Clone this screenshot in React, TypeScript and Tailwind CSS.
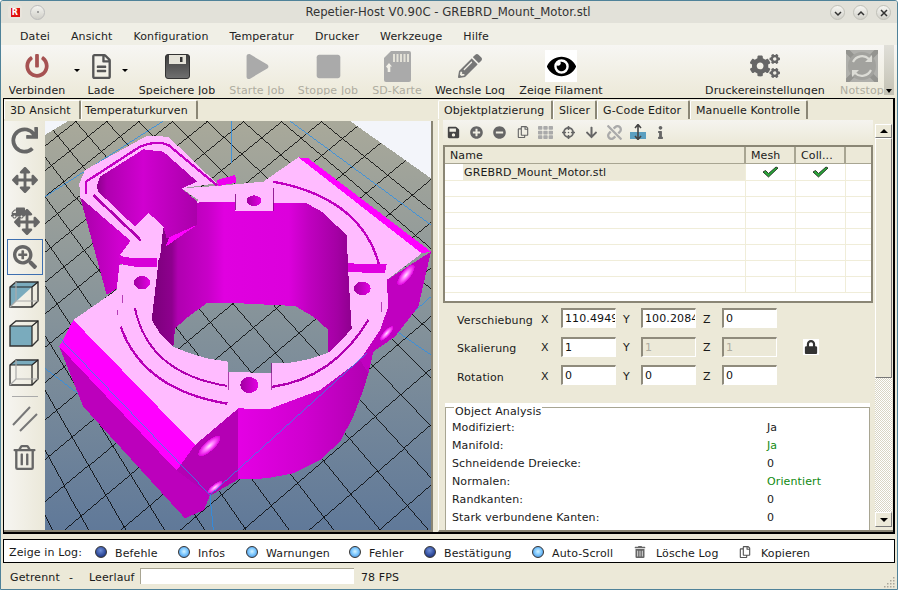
import React from "react";
import {
  FaPowerOff, FaRegFileAlt, FaPlay, FaStop, FaPencilAlt, FaEye, FaCogs,
  FaRedo, FaArrowsAlt, FaTruck, FaSearchPlus, FaRegTrashAlt, FaRegCopy, FaTh, FaArrowDown,
  FaPlusCircle, FaMinusCircle, FaLock, FaUnlink, FaInfo, FaCrosshairs, FaTrashAlt, FaSave,
} from "react-icons/fa";

function solveH(src: number[][], dst: number[][]) {
  const m: number[][] = [];
  src.forEach(([u, v], i) => {
    const [x, y] = dst[i];
    m.push([u, v, 1, 0, 0, 0, -u * x, -v * x, x]);
    m.push([0, 0, 0, u, v, 1, -u * y, -v * y, y]);
  });
  for (let c = 0; c < 8; c++) {
    let p = c;
    for (let r = c; r < 8; r++) if (Math.abs(m[r][c]) > Math.abs(m[p][c])) p = r;
    [m[c], m[p]] = [m[p], m[c]];
    for (let r = 0; r < 8; r++) {
      if (r === c) continue;
      const f = m[r][c] / m[c][c];
      for (let k = c; k < 9; k++) m[r][k] -= f * m[c][k];
    }
  }
  return m.map((row, i) => row[8] / row[i]);
}
const H = solveH(
  [[0, 0], [-5, -5], [-1, -9], [4, 5]],
  [[830, 565], [845, 5], [1357, 5], [735, 1225]]
);
const proj = (u: number, v: number) => {
  const w = H[6] * u + H[7] * v + 1;
  return [(H[0] * u + H[1] * v + H[2]) / w, (H[3] * u + H[4] * v + H[5]) / w, w];
};
function gridLines() {
  const out: string[] = [];
  const R = 20;
  for (let i = -R; i <= R; i++) {
    for (const dir of [0, 1]) {
      let d = "";
      for (let t = -R; t <= R; t += 1) {
        const p = dir ? proj(i, t) : proj(t, i);
        if (p[2] < 0.15) continue;
        d += (d ? "L" : "M") + p[0].toFixed(1) + " " + p[1].toFixed(1);
      }
      out.push(d);
    }
  }
  return out;
}

function Scene() {
  const lines = gridLines();
  return (
    <svg viewBox="135 3 1158 1227" width={386} height={409} className="block shrink-0" shapeRendering="crispEdges">
      <defs>
        <linearGradient id="floor" x1="0" y1="0" x2="0" y2="1">
          <stop offset="0" stopColor="#a9a99a" />
          <stop offset="0.5" stopColor="#84929a" />
          <stop offset="1" stopColor="#607999" />
        </linearGradient>
        <linearGradient id="inner" gradientUnits="userSpaceOnUse" x1="455" y1="0" x2="1060" y2="0">
          <stop offset="0" stopColor="#7a007a" />
          <stop offset="0.1" stopColor="#8e008e" />
          <stop offset="0.13" stopColor="#b000b0" />
          <stop offset="0.28" stopColor="#c800c8" />
          <stop offset="0.36" stopColor="#e000e0" />
          <stop offset="0.68" stopColor="#dc00dc" />
          <stop offset="0.78" stopColor="#c000c0" />
          <stop offset="0.92" stopColor="#a400a4" />
          <stop offset="1" stopColor="#8c008c" />
        </linearGradient>
        <linearGradient id="outer" gradientUnits="userSpaceOnUse" x1="715" y1="0" x2="1110" y2="0">
          <stop offset="0" stopColor="#e400e4" />
          <stop offset="0.5" stopColor="#d000d0" />
          <stop offset="1" stopColor="#b000b0" />
        </linearGradient>
        <linearGradient id="pocket" gradientUnits="userSpaceOnUse" x1="290" y1="0" x2="600" y2="0">
          <stop offset="0" stopColor="#8c008c" />
          <stop offset="0.1" stopColor="#b000b0" />
          <stop offset="0.45" stopColor="#d000d0" />
          <stop offset="1" stopColor="#a800a8" />
        </linearGradient>
        <linearGradient id="backwall" gradientUnits="userSpaceOnUse" x1="240" y1="0" x2="360" y2="0">
          <stop offset="0" stopColor="#a800a8" />
          <stop offset="1" stopColor="#d000d0" />
        </linearGradient>
        <radialGradient id="shine" cx="0.5" cy="0.5" r="0.5">
          <stop offset="0" stopColor="#ffe4ff" />
          <stop offset="0.45" stopColor="#ff70ff" />
          <stop offset="1" stopColor="#e000e0" />
        </radialGradient>
        <linearGradient id="bore" x1="0" y1="0" x2="1" y2="0">
          <stop offset="0" stopColor="#a000a0" />
          <stop offset="1" stopColor="#e400e4" />
        </linearGradient>
        <clipPath id="floorclip">
          <polygon points="135,45 205,3 1050,3 1293,175 1293,1230 135,1230" />
        </clipPath>
      </defs>
      <rect x="135" y="3" width="1158" height="1227" fill="#f3f5fa" />
      <polygon points="135,45 205,3 1050,3 1293,175 1293,1230 135,1230" fill="url(#floor)" />
      <g clipPath="url(#floorclip)" fill="none">
        {lines.map((d, i) => (
          <path key={i} d={d} stroke="#000" strokeWidth="2.4" />
        ))}
        <g stroke="#2b8fe8" strokeWidth="2.4">
          <path d="M135 230L490 3" />
          <path d="M870 3L1293 315" />
          <path d="M695 3V130" />
          <path d="M135 745L630 1125L640 1230" />
          <path d="M1155 610L1293 705" />
          <path d="M1293 530L1100 700" />
        </g>
      </g>

      <g>
        <polygon points="240,230 320,525 352,505 360,430 398,365" fill="url(#backwall)" />
        <polygon points="238,190 255,150 440,48 505,50 650,190 545,205 600,300 470,420 380,420 360,405 395,365 240,232" fill="#ffbbff" />
        <path d="M258 222V185L420 80Q470 60 505 75L652 197" fill="none" stroke="#c400c4" strokeWidth="7" />
        <path d="M281 226L425 363" fill="none" stroke="#b000b0" strokeWidth="8" />

        <polygon points="585,975 715,865 715,1078 625,1130 530,1052" fill="#b400b4" />
        <polygon points="178,680 250,860 555,1195 612,1170 630,1125 530,1052" fill="#bc00bc" />
        <polygon points="220,600 178,680 530,1052 585,975" fill="#ff00ff" />
        <polygon points="715,865 813,865 960,810 1080,720 1116,680 1105,760 1090,810 1060,890 1020,965 960,1020 880,1060 800,1075 715,1078" fill="url(#outer)" />
        <polygon points="1160,480 1293,395 1255,560 1185,650 1120,695 1105,760 1080,720 1140,630 1165,560" fill="#c000c0" />
        <polygon points="895,112 925,115 1293,395 1262,400" fill="#ff00ff" />

        <path
          fillRule="evenodd"
          fill="#ffbbff"
          d="M220 600L350 510L358 435L470 415L476 325L595 240L545 205L650 198L790 185L895 112L1265 400L1160 480L1165 560L1140 630L1080 720L960 810L813 865L813 868L715 865L585 975Z M480 330L600 245L705 245L705 270L820 270L820 248L920 250L965 275L1040 345L1045 460L1050 545L1055 625L1030 655L985 698L925 718L860 730L815 730L815 760L685 755L685 725L620 715L570 700L520 680L480 640L455 600L475 430Z"
        />
        <polygon points="480,330 600,245 705,245 705,270 820,270 820,248 920,250 965,275 1040,345 1045,460 1050,545 1055,625 1030,655 985,698 985,630 940,590 885,558 720,550 620,550 565,590 525,625 520,680 480,640 455,600 475,430" fill="url(#inner)" />
        <polygon points="497,380 510,347 590,315" fill="#ff00ff" />

        <polygon points="290,200 300,170 430,88 490,95 592,185 545,205 592,245 590,315 500,355 490,320 445,280 405,320 295,215" fill="url(#pocket)" />
        <polygon points="445,278 490,320 480,415 405,415 360,405 395,358 425,365 405,320" fill="#ffbbff" />
        <polygon points="358,408 405,415 470,415 470,440 405,440 360,432" fill="#d800d8" />
        <polygon points="650,180 706,165 708,188 655,198" fill="#ee00ee" />

        <polygon points="706,222 820,205 820,272 706,272" fill="#ffbbff" />
        <path d="M706 222V270M820 205V272" stroke="#800080" strokeWidth="2.5" />
        <ellipse cx="762" cy="242" rx="22" ry="16" fill="url(#bore)" />
        <ellipse cx="426" cy="488" rx="24" ry="20" fill="url(#bore)" />
        <ellipse cx="1087" cy="505" rx="25" ry="20" fill="url(#bore)" />
        <ellipse cx="748" cy="795" rx="27" ry="24" fill="url(#bore)" />

        <path d="M820 185Q1090 235 1140 445" fill="none" stroke="#c000c0" strokeWidth="7" />
        <polygon points="1045,430 1110,432 1160,432 1155,458 1095,458 1045,455" fill="#e000e0" />
        <path d="M405 565Q445 760 682 798" fill="none" stroke="#b000b0" strokeWidth="6" />
        <path d="M362 620Q430 810 682 851" fill="none" stroke="#b800b8" strokeWidth="7" />
        <path d="M815 801Q1000 775 1105 600" fill="none" stroke="#b000b0" strokeWidth="7" />
        <path d="M684 755V810M815 730V810" stroke="#800080" strokeWidth="2" />
        <path d="M367 525V548M352 570V585M1145 545V575" stroke="#900090" strokeWidth="2" />

        <ellipse cx="628" cy="978" rx="42" ry="15" transform="rotate(-42 628 978)" fill="url(#shine)" />
        <ellipse cx="645" cy="1102" rx="28" ry="9" transform="rotate(-38 645 1102)" fill="url(#shine)" />
        <ellipse cx="1218" cy="465" rx="38" ry="14" transform="rotate(-52 1218 465)" fill="url(#shine)" />
        <ellipse cx="1160" cy="640" rx="28" ry="9" transform="rotate(-48 1160 640)" fill="url(#shine)" />
      </g>
      <path d="M630 1125L1100 700M180 655L630 1125" stroke="#2b8fe8" strokeWidth="2.4" fill="none" />
    </svg>
  );
}

function Cube({ mode }: { mode: number }) {
  const B = "#7aabbd";
  return (
    <svg width="31" height="27" viewBox="0 0 31 27">
      {mode === 0 && <polygon points="1,6 23,6 1,26" fill={B} />}
      {mode === 0 && <polygon points="1,6 7,1 29,1 23,6" fill={B} />}
      {mode === 1 && <rect x="1" y="6" width="22" height="20" fill={B} />}
      {mode === 2 && <polygon points="1,6 7,1 29,1 23,6" fill={B} />}
      <g fill="none" stroke="#222" strokeWidth="1.2">
        <polygon points="1,6 7,1 29,1 29,20 23,26 1,26" stroke="#333" strokeWidth="1.4" />
        <path d="M1 6H23V26M23 6L29 1" />
        {mode !== 1 && <path d="M7 1V20H29M7 20L1 26" stroke="#aaa" />}
      </g>
    </svg>
  );
}

function SidebarTools() {
  return (
    <div className="w-[41px] shrink-0 flex flex-col items-center bg-gradient-to-r from-[#f6f5f1] to-[#ebe8d9] text-[#666]">
      <div className="h-[39px] flex items-center justify-center"><FaRedo size={27} /></div>
      <div className="h-[39px] flex items-center justify-center"><FaArrowsAlt size={26} /></div>
      <div className="h-[40px] w-full relative flex items-center justify-center">
        <FaTruck size={14} className="absolute left-[7px] top-[7px] -scale-x-100" />
        <FaArrowsAlt size={26} className="ml-[5px] mt-[6px]" />
      </div>
      <div className="h-[36px] w-[36px] ml-px border border-[#3d6fb0] flex items-center justify-center"><FaSearchPlus size={24} /></div>
      <div className="h-[39px] flex items-center justify-center"><Cube mode={0} /></div>
      <div className="h-[39px] flex items-center justify-center"><Cube mode={1} /></div>
      <div className="h-[39px] flex items-center justify-center"><Cube mode={2} /></div>
      <div className="h-[8px] flex items-center"><div className="w-[26px] h-px bg-[#aaa]" /></div>
      <div className="h-[38px] flex items-center justify-center">
        <svg width="28" height="28" viewBox="0 0 28 28"><path d="M2 20L19 2M9 26L26 9" stroke="#777" strokeWidth="2" /></svg>
      </div>
      <div className="h-[39px] flex items-center justify-center"><FaRegTrashAlt size={25} /></div>
    </div>
  );
}

function Tab({ label, w, pl }: { label: string; w: number; pl: number }) {
  return (
    <div
      style={{ width: w, paddingLeft: pl }}
      className="h-[19px] pt-[3px] shrink-0 flex items-center bg-[#ece9d8] border-r-2 border-r-[#8a8675] border-t border-t-white border-l border-l-white rounded-t-[2px] whitespace-nowrap"
    >
      {label}
    </div>
  );
}

function Tool({ w, label, icon, off }: { w: number; label: string; icon: React.ReactNode; off?: boolean }) {
  return (
    <div style={{ width: w }} className="shrink-0 flex flex-col items-center">
      <div className="h-[39px] pt-[3px] flex items-center justify-center overflow-visible">{icon}</div>
      <div className={"h-[11px] overflow-hidden leading-[13px] whitespace-nowrap " + (off ? "text-[#aeaca0]" : "text-[#222]")}>{label}</div>
    </div>
  );
}

function Caret({ w }: { w: number }) {
  return (
    <div style={{ width: w }} className="shrink-0 h-[53px] flex justify-center pt-[24px]">
      <div className="w-0 h-0 border-x-[3px] border-x-transparent border-t-[3px] border-t-black" />
    </div>
  );
}

function Floppy() {
  return (
    <svg width="25" height="25" viewBox="0 0 25 25">
      <defs>
        <linearGradient id="fl" x1="0" y1="0" x2="0" y2="1">
          <stop offset="0" stopColor="#3c3c3c" />
          <stop offset="1" stopColor="#707070" />
        </linearGradient>
      </defs>
      <rect x="0.5" y="0.5" width="24" height="24" rx="2.5" fill="url(#fl)" stroke="#333" />
      <rect x="4" y="1" width="17" height="9" fill="#e4e2d8" />
      <rect x="15" y="3" width="2.5" height="5" fill="#333" />
    </svg>
  );
}

function SdCard() {
  return (
    <svg width="27" height="31" viewBox="0 0 27 31">
      <path d="M7 0H25Q27 0 27 2V29Q27 31 25 31H2Q0 31 0 29V7Z" fill="#aaa" />
      <path d="M10 3V11M13.5 3V11M17 3V11M20.5 3V11M24 3V11" stroke="#e4e2d8" strokeWidth="2" />
      <path d="M5 17L2 13.500L5 10L8 13.500L6.300 13.500V19H3.700V13.500Z" fill="#f2f0e8" transform="translate(0,2)" />
    </svg>
  );
}

function Check() {
  return (
    <svg width="17" height="12" viewBox="0 0 17 12">
      <path d="M1 6L3.5 4.5L6.500 7.500L14 1L16 2L6.500 11Z" fill="#2aa83a" stroke="#1f2f1f" strokeWidth="0.9" />
    </svg>
  );
}

function Field({ v, off }: { v: string; off?: boolean }) {
  return (
    <input
      readOnly
      value={v}
      className={
        "w-[55px] h-[20px] border-t-2 border-l-2 border-t-[#8f8b7c] border-l-[#8f8b7c] border-b border-r border-b-white border-r-white pl-[2px] text-[11px] tracking-[0.12px] outline-none " +
        (off ? "bg-[#ece9d8] text-[#aeaca0]" : "bg-white text-[#111]")
      }
    />
  );
}

function FormRow({ label, vals, lock, h }: { label: string; vals: [string, string, string]; lock?: boolean; h: number }) {
  const dis = !!lock;
  return (
    <div style={{ height: h }} className="flex items-center">
      <div className="w-[98px] pl-[14px] shrink-0 mt-[6px]">{label}</div>
      <div className="w-[20px] shrink-0 mt-[4px]">X</div>
      <Field v={vals[0]} />
      <div className="ml-[7px] w-[18px] shrink-0 mt-[4px]">Y</div>
      <Field v={vals[1]} off={dis} />
      <div className="ml-[7px] w-[19px] shrink-0 mt-[4px]">Z</div>
      <Field v={vals[2]} off={dis} />
      {lock && (
        <div className="ml-[26px] w-[16px] h-[16px] bg-white flex items-center justify-center text-[#333]"><FaLock size={14} /></div>
      )}
    </div>
  );
}

function Led({ on }: { on?: boolean }) {
  return (
    <div
      className={
        "w-[12px] h-[12px] rounded-full border border-[#333] shrink-0 mr-[8px] mt-[2px] " +
        (on
          ? "bg-[radial-gradient(circle_at_50%_45%,#d4f2ff_0%,#7cc8ff_45%,#3b78c8_100%)]"
          : "bg-[radial-gradient(circle_at_45%_35%,#6f8fd8_0%,#2f4a9a_60%,#1a2658_100%)]")
      }
    />
  );
}

function LogItem({ w, label, icon }: { w: number; label: string; icon: React.ReactNode }) {
  return (
    <div style={{ width: w }} className="shrink-0 flex items-center whitespace-nowrap">
      {icon}
      <span className="mt-[6px]">{label}</span>
    </div>
  );
}

const rows = ["Modifiziert:", "Manifold:", "Schneidende Dreiecke:", "Normalen:", "Randkanten:", "Stark verbundene Kanten:"];
const vals: [string, boolean][] = [["Ja", false], ["Ja", true], ["0", false], ["Orientiert", true], ["0", false], ["0", false]];

export default function App() {
  return (
    <div className="w-[898px] h-[590px] overflow-hidden flex flex-col bg-[#ece9d8] border border-[#4f8299] rounded-t-[3px] font-['DejaVu_Sans',sans-serif] text-[11px] tracking-[0.12px] text-[#1a1a1a]">
      {/* title bar */}
      <div className="h-[22px] shrink-0 flex items-center bg-[#e2e1d9] relative">
        <div className="ml-[7px] w-[14px] h-[14px] rounded-[3px] bg-[#e8e4dc] flex items-center justify-center">
          <span className="w-[9px] h-[9px] bg-[#e01010] text-white text-[8px] leading-[9px] font-bold text-center">R</span>
        </div>
        <div className="ml-[8px] w-[15px] h-[15px] rounded-full bg-gradient-to-b from-[#f4f4f0] to-[#d0cfc8] border border-[#bbb] flex items-center justify-center">
          <div className="w-[2px] h-[2px] rounded-full bg-[#888]" />
        </div>
        <div className="flex-1 text-center text-[11.7px] tracking-normal text-[#333] ml-[-20px] mr-[70px] pl-[44px] mt-[2px]">Repetier-Host V0.90C - GREBRD_Mount_Motor.stl</div>
        <div className="absolute right-[6px] top-[4px] flex gap-[8px] text-[#333]">
          {["M3 5l3 3 3-3", "M3 8l3-3 3 3", "M3 3l6 6M9 3l-6 6"].map((d) => (
            <div key={d} className="w-[15px] h-[15px] rounded-full bg-gradient-to-b from-[#f6f6f2] to-[#d2d1ca] border border-[#c0c0b8] flex items-center justify-center">
              <svg width="12" height="12" viewBox="0 0 12 12"><path d={d} stroke="#333" strokeWidth="1.5" fill="none" /></svg>
            </div>
          ))}
        </div>
      </div>
      {/* menu */}
      <div className="h-[22px] shrink-0 flex items-center bg-[#f0efe6] pl-[19px] pt-[6px] gap-[21px] whitespace-nowrap text-[#222]">
        {["Datei", "Ansicht", "Konfiguration", "Temperatur", "Drucker", "Werkzeuge", "Hilfe"].map((m) => (
          <span key={m}>{m}</span>
        ))}
      </div>
      {/* toolbar */}
      <div className="h-[53px] shrink-0 flex bg-gradient-to-b from-[#f7f6f3] to-[#ece9d8] pb-[3px]">
        <Tool w={72} label="Verbinden" icon={<FaPowerOff size={24} color="#a65252" />} />
        <Caret w={8} />
        <Tool w={40} label="Lade" icon={<FaRegFileAlt size={25} color="#555" />} />
        <Caret w={8} />
        <Tool w={96} label="Speichere Job" icon={<Floppy />} />
        <Tool w={64} label="Starte Job" off icon={<FaPlay size={25} color="#aaa" />} />
        <Tool w={78} label="Stoppe Job" off icon={<FaStop size={27} color="#aaa" />} />
        <Tool w={60} label="SD-Karte" off icon={<SdCard />} />
        <Tool w={86} label="Wechsle Log" icon={<FaPencilAlt size={24} color="#777" />} />
        <Tool
          w={96}
          label="Zeige Filament"
          icon={<div className="w-[32px] h-[32px] bg-white flex items-center justify-center"><FaEye size={29} color="#000" /></div>}
        />
        <div className="w-[96px] shrink-0" />
        <Tool w={120} label="Druckereinstellungen" icon={<FaCogs size={30} color="#666" />} />
        <div className="w-[59px] overflow-hidden shrink-0">
          <Tool
            w={74}
            label="Notstop"
            off
            icon={
              <svg width="32" height="32" viewBox="0 0 32 32">
                <rect width="32" height="32" fill="#b0b0ac" rx="2" />
                <path d="M0 0L10 10M32 0L22 10M0 32L10 22M32 32L22 22" stroke="#949490" strokeWidth="5" />
                <circle cx="16" cy="16" r="14" fill="#a2a29e" />
                <path d="M7 12A10 10 0 0 1 23 9M25 20A10 10 0 0 1 9 23" fill="none" stroke="#dcdcd6" strokeWidth="2.200" />
                <path d="M26 5V12H19ZM6 27V20H13Z" fill="#dcdcd6" />
              </svg>
            }
          />
        </div>
        <div className="w-[10px] h-[50px] bg-gradient-to-b from-[#e0dfd8] to-[#c4c2b4] relative">
          <div className="absolute bottom-[2px] left-[2px] w-0 h-0 border-x-[3px] border-x-transparent border-t-[4px] border-t-black" />
        </div>
      </div>
      {/* main */}
      <div className="h-[436px] shrink-0 mx-[2px] border-r-2 border-b-2 border-l border-t border-black flex">
        {/* left pane */}
        <div className="w-[431px] shrink-0 flex flex-col">
          <div className="h-[22px] pt-px flex shrink-0">
            <Tab label="3D Ansicht" w={77} pl={5} />
            <Tab label="Temperaturkurven" w={117} pl={3} />
          </div>
          <div className="flex flex-1 min-h-0 w-[429px] border-b-2 border-b-[#8a8675] border-r-2 border-r-[#8a8675]">
            <SidebarTools />
            <Scene />
          </div>
        </div>
        {/* right pane */}
        <div className="flex-1 flex flex-col pl-[3px] min-w-0">
          <div className="h-[21px] pt-px flex shrink-0">
            <Tab label="Objektplatzierung" w={115} pl={5} />
            <Tab label="Slicer" w={44} pl={5} />
            <Tab label="G-Code Editor" w={93} pl={5} />
            <Tab label="Manuelle Kontrolle" w={118} pl={5} />
          </div>
          <div className="flex flex-1 min-h-0 border-l border-l-white border-b-2 border-b-[#8a8675] pl-[4px]">
            <div className="w-[430px] shrink-0 flex flex-col overflow-hidden">
              {/* mini toolbar */}
              <div className="h-[24px] shrink-0 flex items-center bg-gradient-to-b from-[#f5f4ef] to-[#ece9d8] text-[#666] -ml-[1px]">
                {[
                  <FaSave size={13} color="#444" />,
                  <FaPlusCircle size={13} />,
                  <FaMinusCircle size={13} />,
                  <FaRegCopy size={12} />,
                  <FaTh size={15} color="#aaa" />,
                  <FaCrosshairs size={13} />,
                  <FaArrowDown size={13} />,
                  <FaUnlink size={15} color="#aaa" />,
                  <svg width="16" height="16" viewBox="0 0 16 16">
                    <rect x="0" y="8" width="16" height="7" fill="#5b9fc0" />
                    <path d="M8 1V15M5 4L8 0.500L11 4M5 12L8 15.500L11 12" stroke="#444" strokeWidth="1.600" fill="none" />
                  </svg>,
                  <FaInfo size={13} />,
                ].map((ic, i) => (
                  <div key={i} className="w-[23px] h-[16px] flex items-center justify-center shrink-0">{ic}</div>
                ))}
              </div>
              {/* table */}
              <div className="h-[158px] mt-px w-[430px] shrink-0 border-2 border-[#8a8675] bg-white overflow-hidden">
                <div className="h-[17px] flex bg-[#ece9d8] border-b border-[#a8a592] leading-[17px]">
                  <div className="w-[301px] pl-[5px] border-r-2 border-[#a8a592]">Name</div>
                  <div className="w-[50px] pl-[5px] border-r-2 border-[#a8a592]">Mesh</div>
                  <div className="w-[50px] pl-[5px] border-r-2 border-[#a8a592]">Coll...</div>
                </div>
                <div className="h-[17px] flex border-b border-[#f0edd9]">
                  <div className="w-[301px] pl-[18px] border-r border-[#f0edd9]">
                    <div className="bg-[#ece9d8] h-full pl-px leading-[18px]">GREBRD_Mount_Motor.stl</div>
                  </div>
                  <div className="w-[50px] flex items-center justify-center border-r border-[#f0edd9]"><Check /></div>
                  <div className="w-[50px] flex items-center justify-center border-r border-[#f0edd9]"><Check /></div>
                </div>
                {[0, 1, 2, 3, 4, 5, 6].map((i) => (
                  <div key={i} className="h-[16px] flex border-b border-[#f0edd9]">
                    <div className="w-[301px] border-r border-[#f0edd9]" />
                    <div className="w-[50px] border-r border-[#f0edd9]" />
                    <div className="w-[50px] border-r border-[#f0edd9]" />
                  </div>
                ))}
              </div>
              {/* form */}
              <div className="pt-px h-[100px] shrink-0">
                <FormRow h={28} label="Verschiebung" vals={["110.49495", "100.20845", "0"]} />
                <FormRow h={29} label="Skalierung" vals={["1", "1", "1"]} lock />
                <FormRow h={28} label="Rotation" vals={["0", "0", "0"]} />
              </div>
              {/* analysis */}
              <div className="ml-[2px] w-[425px] flex-1 min-h-0 bg-white relative">
                <div className="absolute left-0 right-0 top-[4px] bottom-0 border border-b-0 border-[#a8a592]" />
                <div className="absolute left-[9px] top-[2px] bg-white px-px leading-[14px]">Object Analysis</div>
                <div className="absolute left-[7px] top-[16px] w-[400px]">
                  {rows.map((r, i) => (
                    <div key={r} className="h-[18px] flex items-center">
                      <div className="w-[315px] shrink-0">{r}</div>
                      <div className={vals[i][1] ? "text-[#118a11]" : ""}>{vals[i][0]}</div>
                    </div>
                  ))}
                </div>
              </div>
            </div>
            {/* scrollbar */}
            <div className="w-[17px] ml-[2px] shrink-0 flex flex-col bg-[image:repeating-conic-gradient(#d8d5c4_0%_25%,#ffffff_0%_50%)] bg-[length:2px_2px] mb-[3px] mt-[4px]">
              <div className="h-[14px] bg-[#ece9d8] border border-t-white border-l-white border-r-[#777] border-b-[#777] flex items-center justify-center">
                <div className="w-0 h-0 border-x-[4px] border-x-transparent border-b-[4px] border-b-black" />
              </div>
              <div className="h-[240px] bg-[#ece9d8] border border-t-white border-l-white border-r-[#777] border-b-[#777]" />
              <div className="flex-1" />
              <div className="h-[15px] bg-[#ece9d8] border border-t-white border-l-white border-r-[#777] border-b-[#777] flex items-center justify-center">
                <div className="w-0 h-0 border-x-[4px] border-x-transparent border-t-[4px] border-t-black" />
              </div>
            </div>
          </div>
        </div>
      </div>
      <div className="h-[5px] shrink-0" />
      {/* log bar */}
      <div className="h-[24px] shrink-0 mx-[2px] border border-black bg-white flex items-center pl-[5px] whitespace-nowrap">
        <div className="w-[86px] shrink-0 mt-[4px]">Zeige in Log:</div>
        <LogItem w={83} label="Befehle" icon={<Led />} />
        <LogItem w={68} label="Infos" icon={<Led on />} />
        <LogItem w={103} label="Warnungen" icon={<Led on />} />
        <LogItem w={75} label="Fehler" icon={<Led on />} />
        <LogItem w={108} label="Bestätigung" icon={<Led />} />
        <LogItem w={102} label="Auto-Scroll" icon={<Led on />} />
        <LogItem w={105} label="Lösche Log" icon={<FaTrashAlt size={12} color="#666" className="mr-[10px] mt-[2px]" />} />
        <LogItem w={100} label="Kopieren" icon={<FaRegCopy size={12} color="#555" className="mr-[10px] mt-[2px]" />} />
      </div>
      {/* status bar */}
      <div className="flex-1 flex items-center pl-[9px] whitespace-nowrap relative">
        <span className="w-[59px] mt-[5px]">Getrennt</span>
        <span className="w-[20px] mt-[5px]">-</span>
        <span className="w-[51px] mt-[5px]">Leerlauf</span>
        <div className="w-[214px] h-[16px] bg-white border-t border-l border-[#a8a592]" />
        <span className="ml-[7px] mt-[5px]">78 FPS</span>
        <svg className="absolute right-[1px] bottom-[1px]" width="12" height="12" viewBox="0 0 12 12">
          {[[9, 1], [9, 4], [6, 4], [9, 7], [6, 7], [3, 7], [9, 10], [6, 10], [3, 10], [0, 10]].map(([x, y]) => (
            <rect key={x + "-" + y} x={x} y={y} width="1.500" height="1.500" fill="#aaa69a" />
          ))}
        </svg>
      </div>
    </div>
  );
}
